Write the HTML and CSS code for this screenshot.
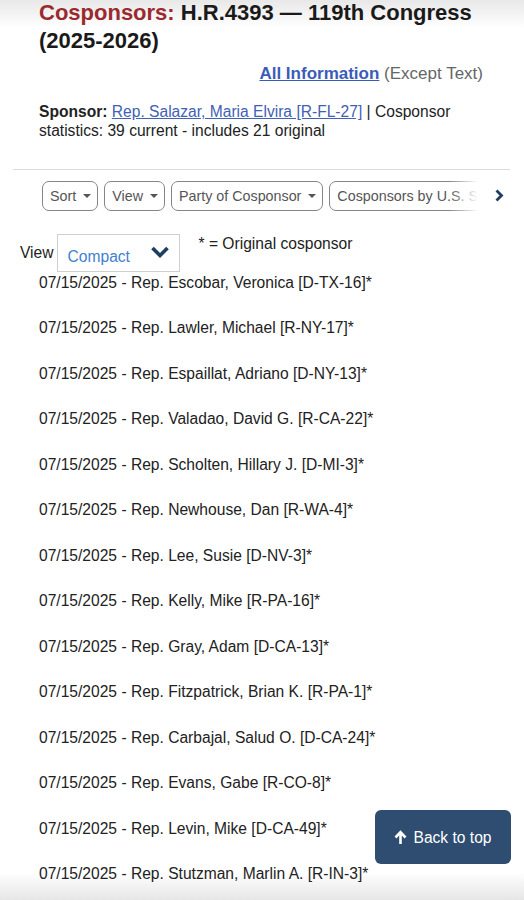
FILE: index.html
```html
<!DOCTYPE html>
<html lang="en">
<head>
  <meta charset="UTF-8">
  <title>Cosponsors: H.R.4393 — 119th Congress (2025-2026)</title>
  <link rel="stylesheet" href="styles.css">
</head>
<body>
  <div class="page">
    <h1 class="title"><span class="title-label">Cosponsors:</span> H.R.4393 — 119th Congress (2025-2026)</h1>
    <p class="all-info"><a href="#">All Information</a> (Except Text)</p>
    <p class="sponsor"><strong>Sponsor:</strong> <a href="#">Rep. Salazar, Maria Elvira [R-FL-27]</a> | Cosponsor statistics: 39 current - includes 21 original</p>
    <hr class="divider">

    <div class="facets">
      <div class="facet-scroll">
        <button class="facet">Sort <i class="caret"></i></button>
        <button class="facet">View <i class="caret"></i></button>
        <button class="facet">Party of Cosponsor <i class="caret"></i></button>
        <button class="facet">Cosponsors by U.S. State <i class="caret"></i></button>
      </div>
      <span class="facet-next">
        <svg width="9" height="13" viewBox="0 0 9 13"><path d="M1.5 1.5 L6.5 6.5 L1.5 11.5" fill="none" stroke="#1f3d63" stroke-width="2.8"/></svg>
      </span>
    </div>

    <div class="view-row">
      <span class="view-label">View</span>
      <div class="view-select">
        <span class="view-value">Compact</span>
        <svg width="20" height="14" viewBox="0 0 20 14"><path d="M2.5 3 L10 10.5 L17.5 3" fill="none" stroke="#1f3d63" stroke-width="3.6"/></svg>
      </div>
      <span class="legend">* = Original cosponsor</span>
    </div>

    <ol class="cosponsors">
      <li>07/15/2025 - Rep. Escobar, Veronica [D-TX-16]*</li>
      <li>07/15/2025 - Rep. Lawler, Michael [R-NY-17]*</li>
      <li>07/15/2025 - Rep. Espaillat, Adriano [D-NY-13]*</li>
      <li>07/15/2025 - Rep. Valadao, David G. [R-CA-22]*</li>
      <li>07/15/2025 - Rep. Scholten, Hillary J. [D-MI-3]*</li>
      <li>07/15/2025 - Rep. Newhouse, Dan [R-WA-4]*</li>
      <li>07/15/2025 - Rep. Lee, Susie [D-NV-3]*</li>
      <li>07/15/2025 - Rep. Kelly, Mike [R-PA-16]*</li>
      <li>07/15/2025 - Rep. Gray, Adam [D-CA-13]*</li>
      <li>07/15/2025 - Rep. Fitzpatrick, Brian K. [R-PA-1]*</li>
      <li>07/15/2025 - Rep. Carbajal, Salud O. [D-CA-24]*</li>
      <li>07/15/2025 - Rep. Evans, Gabe [R-CO-8]*</li>
      <li>07/15/2025 - Rep. Levin, Mike [D-CA-49]*</li>
      <li>07/15/2025 - Rep. Stutzman, Marlin A. [R-IN-3]*</li>
    </ol>
  </div>

  <a class="back-top" href="#">
    <svg width="13" height="15" viewBox="0 0 13 15"><path d="M6.5 14 V2.5 M1.5 7.5 L6.5 2.2 L11.5 7.5" fill="none" stroke="#fff" stroke-width="2.6"/></svg>
    Back to top
  </a>
</body>
</html>
```

FILE: styles.css
```css
html{
  background-color: #fff;
  background-image: linear-gradient(to bottom, #e8e8e8 0, #fff 28px, #fff 872px, #e6e6e6 900px);
  background-repeat: no-repeat;
  background-size: 100% 900px;
}
body{
  margin: 0;
  font-family: "Liberation Sans", Arial, sans-serif;
  font-size: 15.6px;
  line-height: 19px;
  color: #222;
}
.page{
  padding: 0 41px 0 39px;
}
.title{
  margin: -1px 0 0;
  font-size: 22px;
  line-height: 28px;
  font-weight: bold;
  color: #1a1a1a;
}
.title-label{
  color: #9b2a2e;
}
.all-info{
  margin: 8px 0 0;
  text-align: right;
  font-size: 17px;
  line-height: 22px;
  color: #666;
}
.all-info a{
  color: #3a5cb8;
  font-weight: bold;
}
.sponsor{
  margin: 17.4px 0 0;
}
.sponsor a{
  color: #3f62b4;
}
.divider{
  margin: 28.6px -27px 0 -26px;
  border: 0;
  border-top: 1px solid #dcdcdc;
  height: 0;
}

/* facet buttons */
.facets{
  display: flex;
  align-items: center;
  margin: 11px 0 0 3px;
}
.facet-scroll{
  flex: 1;
  display: flex;
  gap: 6px;
  overflow: hidden;
  position: relative;
}
.facet-scroll::after{
  content: "";
  position: absolute;
  right: 0;
  top: 0;
  bottom: 0;
  width: 34px;
  background: linear-gradient(to right, rgba(255,255,255,0), #fff 85%);
}
.facet{
  flex: none;
  display: inline-flex;
  align-items: center;
  gap: 7px;
  height: 30px;
  padding: 0 6px 0 7px;
  border: 1px solid #858585;
  border-radius: 7px;
  background: #fff;
  font-family: inherit;
  font-size: 14.3px;
  color: #555;
}
.caret{
  width: 0;
  height: 0;
  border-left: 4px solid transparent;
  border-right: 4px solid transparent;
  border-top: 4.5px solid #555;
}
.facet-next{
  display: flex;
  width: 12px;
  margin: 0 -24px 0 12px;
  justify-content: flex-start;
}

/* compact view selector */
.view-row{
  display: flex;
  align-items: flex-start;
  margin: 23px 0 0 -19px;
}
.view-label{
  margin: 9px 3px 0 0;
}
.view-select{
  display: flex;
  align-items: flex-start;
  justify-content: space-between;
  box-sizing: border-box;
  width: 123px;
  height: 38px;
  padding: 0 9px 0 10px;
  border: 1px solid #cfcfcf;
}
.view-value{
  margin-top: 12px;
  color: #3f80d2;
}
.view-select svg{
  margin-top: 10px;
}
.legend{
  margin-left: 19px;
}

.cosponsors{
  list-style: none;
  margin: 1px 0 0;
  padding: 0;
}
.cosponsors li{
  margin-bottom: 26.5px;
}

.back-top{
  position: fixed;
  right: 13px;
  bottom: 36px;
  width: 136px;
  height: 54px;
  display: flex;
  align-items: center;
  justify-content: center;
  gap: 6px;
  border-radius: 6px;
  background: #2e4d70;
  color: #fff;
  font-size: 15.6px;
  text-decoration: none;
}
```
